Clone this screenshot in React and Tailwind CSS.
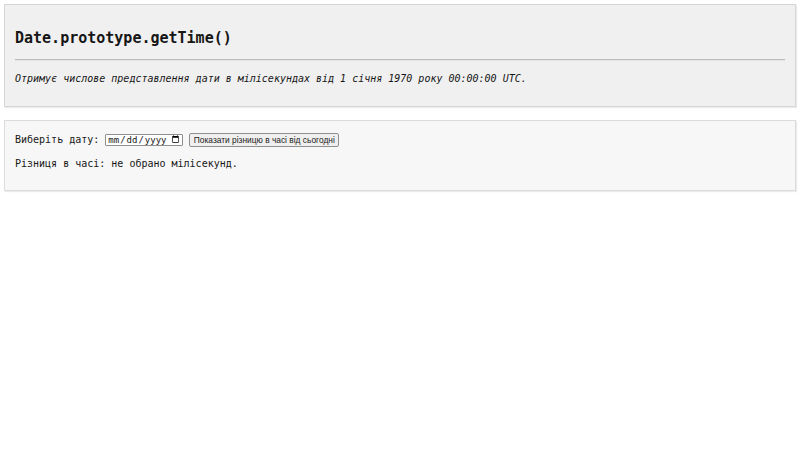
export default function App() {
    return (
        <div className="p-1 font-['DejaVu_Sans_Mono',monospace] text-[10px] leading-[12px] text-[#161616]">
            {/* Header card */}
            <div className="border border-[#d6d6d6] bg-[#f0f0f0] px-[10px] pt-[24px] pb-[21px] shadow-[1px_1px_1px_rgba(0,0,0,0.08)]">
                <h2 className="text-[15px] leading-[18px] font-bold">Date.prototype.getTime()</h2>
                <hr className="mt-[12px] border-0 border-t border-t-[#bdbdbd] border-b border-b-[#e4e4e4]" />
                <p className="mt-[12px] italic">
                    Отримує числове представлення дати в мілісекундах від 1 січня 1970 року 00:00:00 UTC.
                </p>
            </div>

            {/* Demo card */}
            <div className="mt-[13px] border border-[#dcdcdc] bg-[#f7f7f7] px-[10px] pt-[11px] pb-[20px] shadow-[1px_1px_1px_rgba(0,0,0,0.08)]">
                <div className="flex items-center h-[15px]">
                    <label htmlFor="date">Виберіть дату:</label>
                    <input
                        id="date"
                        type="date"
                        className="ml-[6px] w-[78px] h-[12px] p-0 pl-[1px] text-[9px] leading-[10px] font-['DejaVu_Sans_Mono',monospace] bg-white border border-[#8f8f8f] rounded-[1px]"
                    />
                    <button className="ml-[6px] h-[14px] w-[150px] px-[3px] font-['Liberation_Sans',Arial,sans-serif] text-[8.4px] leading-[10px] text-[#222] bg-[#efefef] border border-[#8f8f8f] rounded-[2px]">
                        Показати різницю в часі від сьогодні
                    </button>
                </div>
                <p className="mt-[11px]">Різниця в часі: не обрано мілісекунд.</p>
            </div>
        </div>
    );
}
